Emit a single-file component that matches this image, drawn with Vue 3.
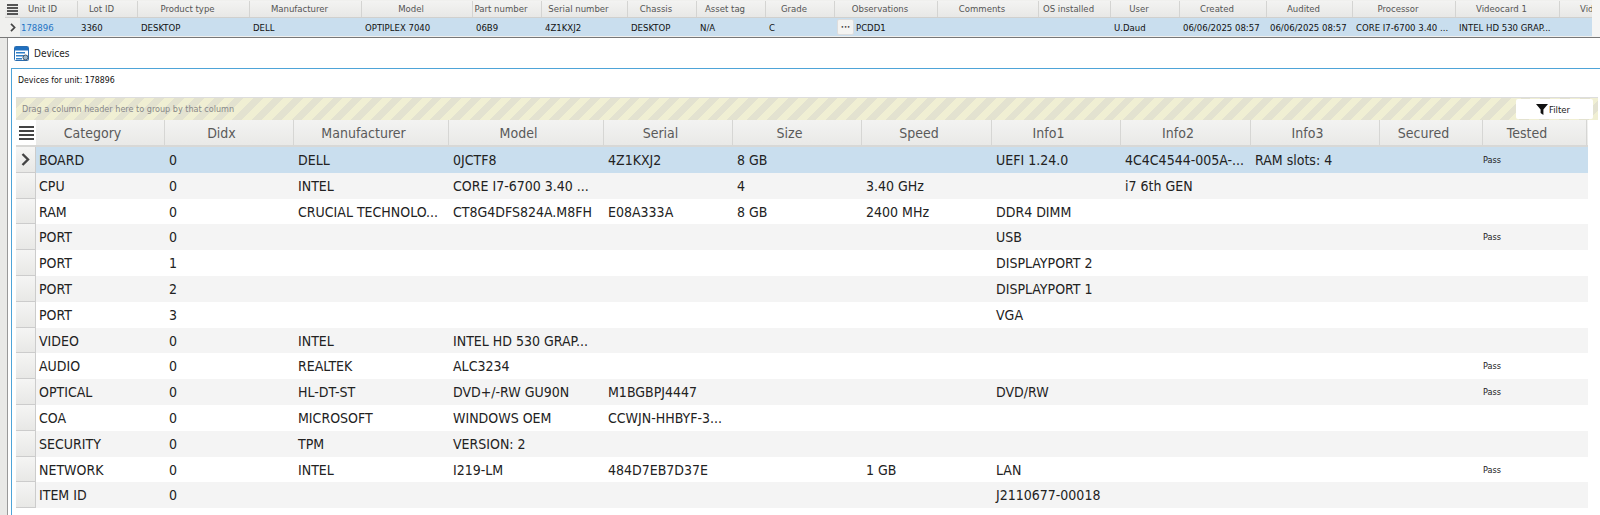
<script setup>
const topCols = [
  ['Unit ID', 58, '178896'], ['Lot ID', 60, '3360'], ['Product type', 112, 'DESKTOP'], ['Manufacturer', 112, 'DELL'],
  ['Model', 111, 'OPTIPLEX 7040'], ['Part number', 69, '06B9'], ['Serial number', 86, '4Z1KXJ2'], ['Chassis', 69, 'DESKTOP'],
  ['Asset tag', 69, 'N/A'], ['Grade', 69, 'C'], ['Observations', 103, 'PCDD1'], ['Comments', 101, ''], ['OS installed', 72, ''],
  ['User', 69, 'U.Daud'], ['Created', 87, '06/06/2025 08:57'], ['Audited', 86, '06/06/2025 08:57'],
  ['Processor', 103, 'CORE I7-6700 3.40 ...'], ['Videocard 1', 104, 'INTEL HD 530 GRAP...'], ['Videocard 2', 104, '']
]
const cols = [
  ['Category', 129], ['Didx', 129], ['Manufacturer', 155], ['Model', 155], ['Serial', 129], ['Size', 129], ['Speed', 130],
  ['Info1', 129], ['Info2', 130], ['Info3', 129], ['Secured', 103], ['Tested', 104]
]
const rows = [
  ['BOARD', '0', 'DELL', '0JCTF8', '4Z1KXJ2', '8 GB', '', 'UEFI 1.24.0', '4C4C4544-005A-...', 'RAM slots: 4', '', 'Pass'],
  ['CPU', '0', 'INTEL', 'CORE I7-6700 3.40 ...', '', '4', '3.40 GHz', '', 'i7 6th GEN', '', '', ''],
  ['RAM', '0', 'CRUCIAL TECHNOLO...', 'CT8G4DFS824A.M8FH', 'E08A333A', '8 GB', '2400 MHz', 'DDR4 DIMM', '', '', '', ''],
  ['PORT', '0', '', '', '', '', '', 'USB', '', '', '', 'Pass'],
  ['PORT', '1', '', '', '', '', '', 'DISPLAYPORT 2', '', '', '', ''],
  ['PORT', '2', '', '', '', '', '', 'DISPLAYPORT 1', '', '', '', ''],
  ['PORT', '3', '', '', '', '', '', 'VGA', '', '', '', ''],
  ['VIDEO', '0', 'INTEL', 'INTEL HD 530 GRAP...', '', '', '', '', '', '', '', ''],
  ['AUDIO', '0', 'REALTEK', 'ALC3234', '', '', '', '', '', '', '', 'Pass'],
  ['OPTICAL', '0', 'HL-DT-ST', 'DVD+/-RW GU90N', 'M1BGBPJ4447', '', '', 'DVD/RW', '', '', '', 'Pass'],
  ['COA', '0', 'MICROSOFT', 'WINDOWS OEM', 'CCWJN-HHBYF-3...', '', '', '', '', '', '', ''],
  ['SECURITY', '0', 'TPM', 'VERSION: 2', '', '', '', '', '', '', '', ''],
  ['NETWORK', '0', 'INTEL', 'I219-LM', '484D7EB7D37E', '', '1 GB', 'LAN', '', '', '', 'Pass'],
  ['ITEM ID', '0', '', '', '', '', '', 'J2110677-00018', '', '', '', '']
]
</script>

<template>
  <div class="page">
    <section class="top-grid">
      <div class="top-row top-head">
        <div class="top-menu"><span class="bars small"><i></i><i></i><i></i><i></i></span></div>
        <div v-for="c in topCols" :key="c[0]" class="top-h" :style="{ width: c[1] + 'px' }">{{ c[0] }}</div>
      </div>
      <div class="top-row top-data">
        <div class="top-ind"><svg width="6" height="9" viewBox="0 0 6 9"><path d="M1 .8 4.6 4.5 1 8.2" fill="none" stroke="#444" stroke-width="1.7"/></svg></div>
        <div v-for="(c, i) in topCols" :key="c[0]" class="top-d" :class="{ link: i === 0, obs: c[0] === 'Observations' }" :style="{ width: c[1] + 'px' }">
          <span v-if="c[0] === 'Observations'" class="dots">•••</span>{{ c[2] }}
        </div>
      </div>
      <div class="vscroll"></div>
    </section>

    <section class="window">
      <header class="title">
        <svg width="15" height="15" viewBox="0 0 15 15">
          <rect x=".5" y=".5" width="14" height="14" rx="1" fill="#fff" stroke="#2a6db0"/>
          <rect x="1" y="1" width="13" height="3.5" fill="#1f6fbf"/>
          <rect x="2" y="6" width="9" height="1.5" fill="#2f7fc7"/>
          <rect x="2" y="9" width="9" height="1.5" fill="#2f7fc7"/>
          <rect x="2" y="12" width="6" height="1.5" fill="#2f7fc7"/>
          <circle cx="11.5" cy="11.5" r="2.5" fill="#9db8cc" stroke="#456"/>
        </svg>
        <span>Devices</span>
      </header>
      <div class="panel">
        <p class="caption">Devices for unit: 178896</p>
        <div class="group">
          <span class="group-text">Drag a column header here to group by that column</span>
          <button class="filter">
            <svg width="12" height="11" viewBox="0 0 12 11"><path d="M0 0h12L7.4 5.4V11L4.6 9V5.4Z" fill="#111"/></svg>Filter
          </button>
        </div>
        <div class="grid">
          <div class="row head">
            <div class="ind head-ind"><span class="bars"><i></i><i></i><i></i><i></i></span></div>
            <div v-for="c in cols" :key="c[0]" class="h" :style="{ width: c[1] + 'px' }">{{ c[0] }}</div>
          </div>
          <div v-for="(r, ri) in rows" :key="ri" class="row data" :class="{ sel: ri === 0, alt: ri > 0 && ri % 2 === 1 }">
            <div class="ind">
              <svg v-if="ri === 0" width="9" height="13" viewBox="0 0 9 13"><path d="M1.5 1 7 6.5 1.5 12" fill="none" stroke="#444" stroke-width="2.4"/></svg>
            </div>
            <div v-for="(v, ci) in r" :key="ci" class="d" :class="{ pass: ci === 11 }" :style="{ width: cols[ci][1] + 'px' }">{{ v }}</div>
          </div>
        </div>
      </div>
    </section>
  </div>
</template>

<style>
html, body { margin: 0; background: #fff; overflow: hidden; }
</style>

<style scoped>
.page { width: 1600px; height: 515px; overflow: hidden; background: #e9e9e7; font-family: "DejaVu Sans Condensed", "DejaVu Sans", sans-serif; font-stretch: condensed; color: #222; position: relative; }
.top-grid { height: 38px; padding: 1px 0 0 5px; box-sizing: border-box; border-bottom: 1px solid #777; background: #f0f0ee; overflow: hidden; position: relative; }
.vscroll { position: absolute; top: 0; right: 0; bottom: 0; width: 8px; background: #f5f5f4; }
.top-row { display: flex; width: 1700px; }
.top-head { height: 17px; background: linear-gradient(#f3f3f2, #e8e8e6); border-bottom: 1px solid #d0d0ce; box-sizing: border-box; }
.top-menu { width: 15px; flex: none; display: flex; align-items: center; justify-content: center; }
.top-h { flex: none; box-sizing: border-box; border-right: 1px solid #d4d4d2; padding-right: 12px; text-align: center; font-size: 9.5px; line-height: 16px; color: #555; white-space: nowrap; overflow: hidden; }
.top-data { height: 18px; background: #c9deee; }
.top-ind { width: 15px; flex: none; background: #f0f0ee; display: flex; align-items: center; justify-content: center; }
.top-d { flex: none; box-sizing: border-box; padding-left: 3px; font-size: 9.5px; line-height: 17px; color: #111; white-space: nowrap; overflow: hidden; display: flex; align-items: center; }
.top-d.link { color: #1f74c4; padding-left: 1px; }
.top-d.obs { padding-left: 2px; }
.dots { width: 15px; height: 14px; background: #f4f4f2; border: 1px solid #ddd; border-radius: 2px; font-size: 6px; line-height: 14px; text-align: center; margin-right: 2px; color: #333; flex: none; box-sizing: content-box; }
.window { position: absolute; left: 7px; top: 38px; right: 0; bottom: 0; background: #fff; border-left: 1px solid #999; }
.title { height: 30px; display: flex; align-items: center; gap: 5px; padding-left: 6px; font-size: 10px; color: #222; }
.panel { position: absolute; left: 3px; top: 30px; right: 0; bottom: 0; border-left: 1px solid #4ea4d8; border-top: 1px solid #4ea4d8; }
.caption { margin: 0; height: 28px; padding-left: 6px; font-size: 8.7px; line-height: 22px; color: #111; }
.group { margin-left: 4px; margin-right: 2px; height: 23px; box-sizing: border-box; border-top: 1px solid #ddd; display: flex; align-items: center; justify-content: space-between; background: repeating-linear-gradient(-45deg, #f0efd3 0 7px, #e3e2d0 7px 14px); }
.group-text { padding-left: 6px; font-size: 9px; color: #888; }
.filter { width: 77px; height: 20px; margin-right: 5px; padding: 0 3px 0 0; border: 0; background: #fff; border-radius: 2px; display: flex; align-items: center; justify-content: center; gap: 1px; font: inherit; font-size: 9.5px; color: #222; box-sizing: border-box; }
.grid { margin-left: 4px; width: 1572px; }
.row { display: flex; box-sizing: border-box; }
.head { height: 27px; background: linear-gradient(#f3f3f2, #e9e9e7); border-bottom: 2px solid #d8d8d6; }
.ind { width: 20px; flex: none; box-sizing: border-box; background: linear-gradient(#f5f5f4, #e8e8e6); border-right: 1px solid #ccc; border-bottom: 1px solid #ccc; display: flex; align-items: center; justify-content: center; }
.head-ind { background: #fff; border: 0; }
.h { flex: none; box-sizing: border-box; border-right: 1px solid #d6d6d4; padding-right: 15px; text-align: center; font-size: 14px; line-height: 27px; color: #5a5a5a; }
.data { height: 25.8px; background: #fff; }
.data.alt { background: #f4f4f4; }
.data.sel { background: #c9deee; }
.d { flex: none; box-sizing: border-box; padding-left: 4px; font-size: 14px; line-height: 26px; color: #222; white-space: nowrap; overflow: hidden; }
.d:nth-child(2) { padding-left: 3px; }
.d.pass { font-size: 9px; padding-left: 0; }
.bars { display: flex; flex-direction: column; gap: 2px; width: 15px; }
.bars i { display: block; height: 2px; background: #444; }
.bars.small { width: 11px; gap: 1px; }
.bars.small i { background: #555; }
</style>
